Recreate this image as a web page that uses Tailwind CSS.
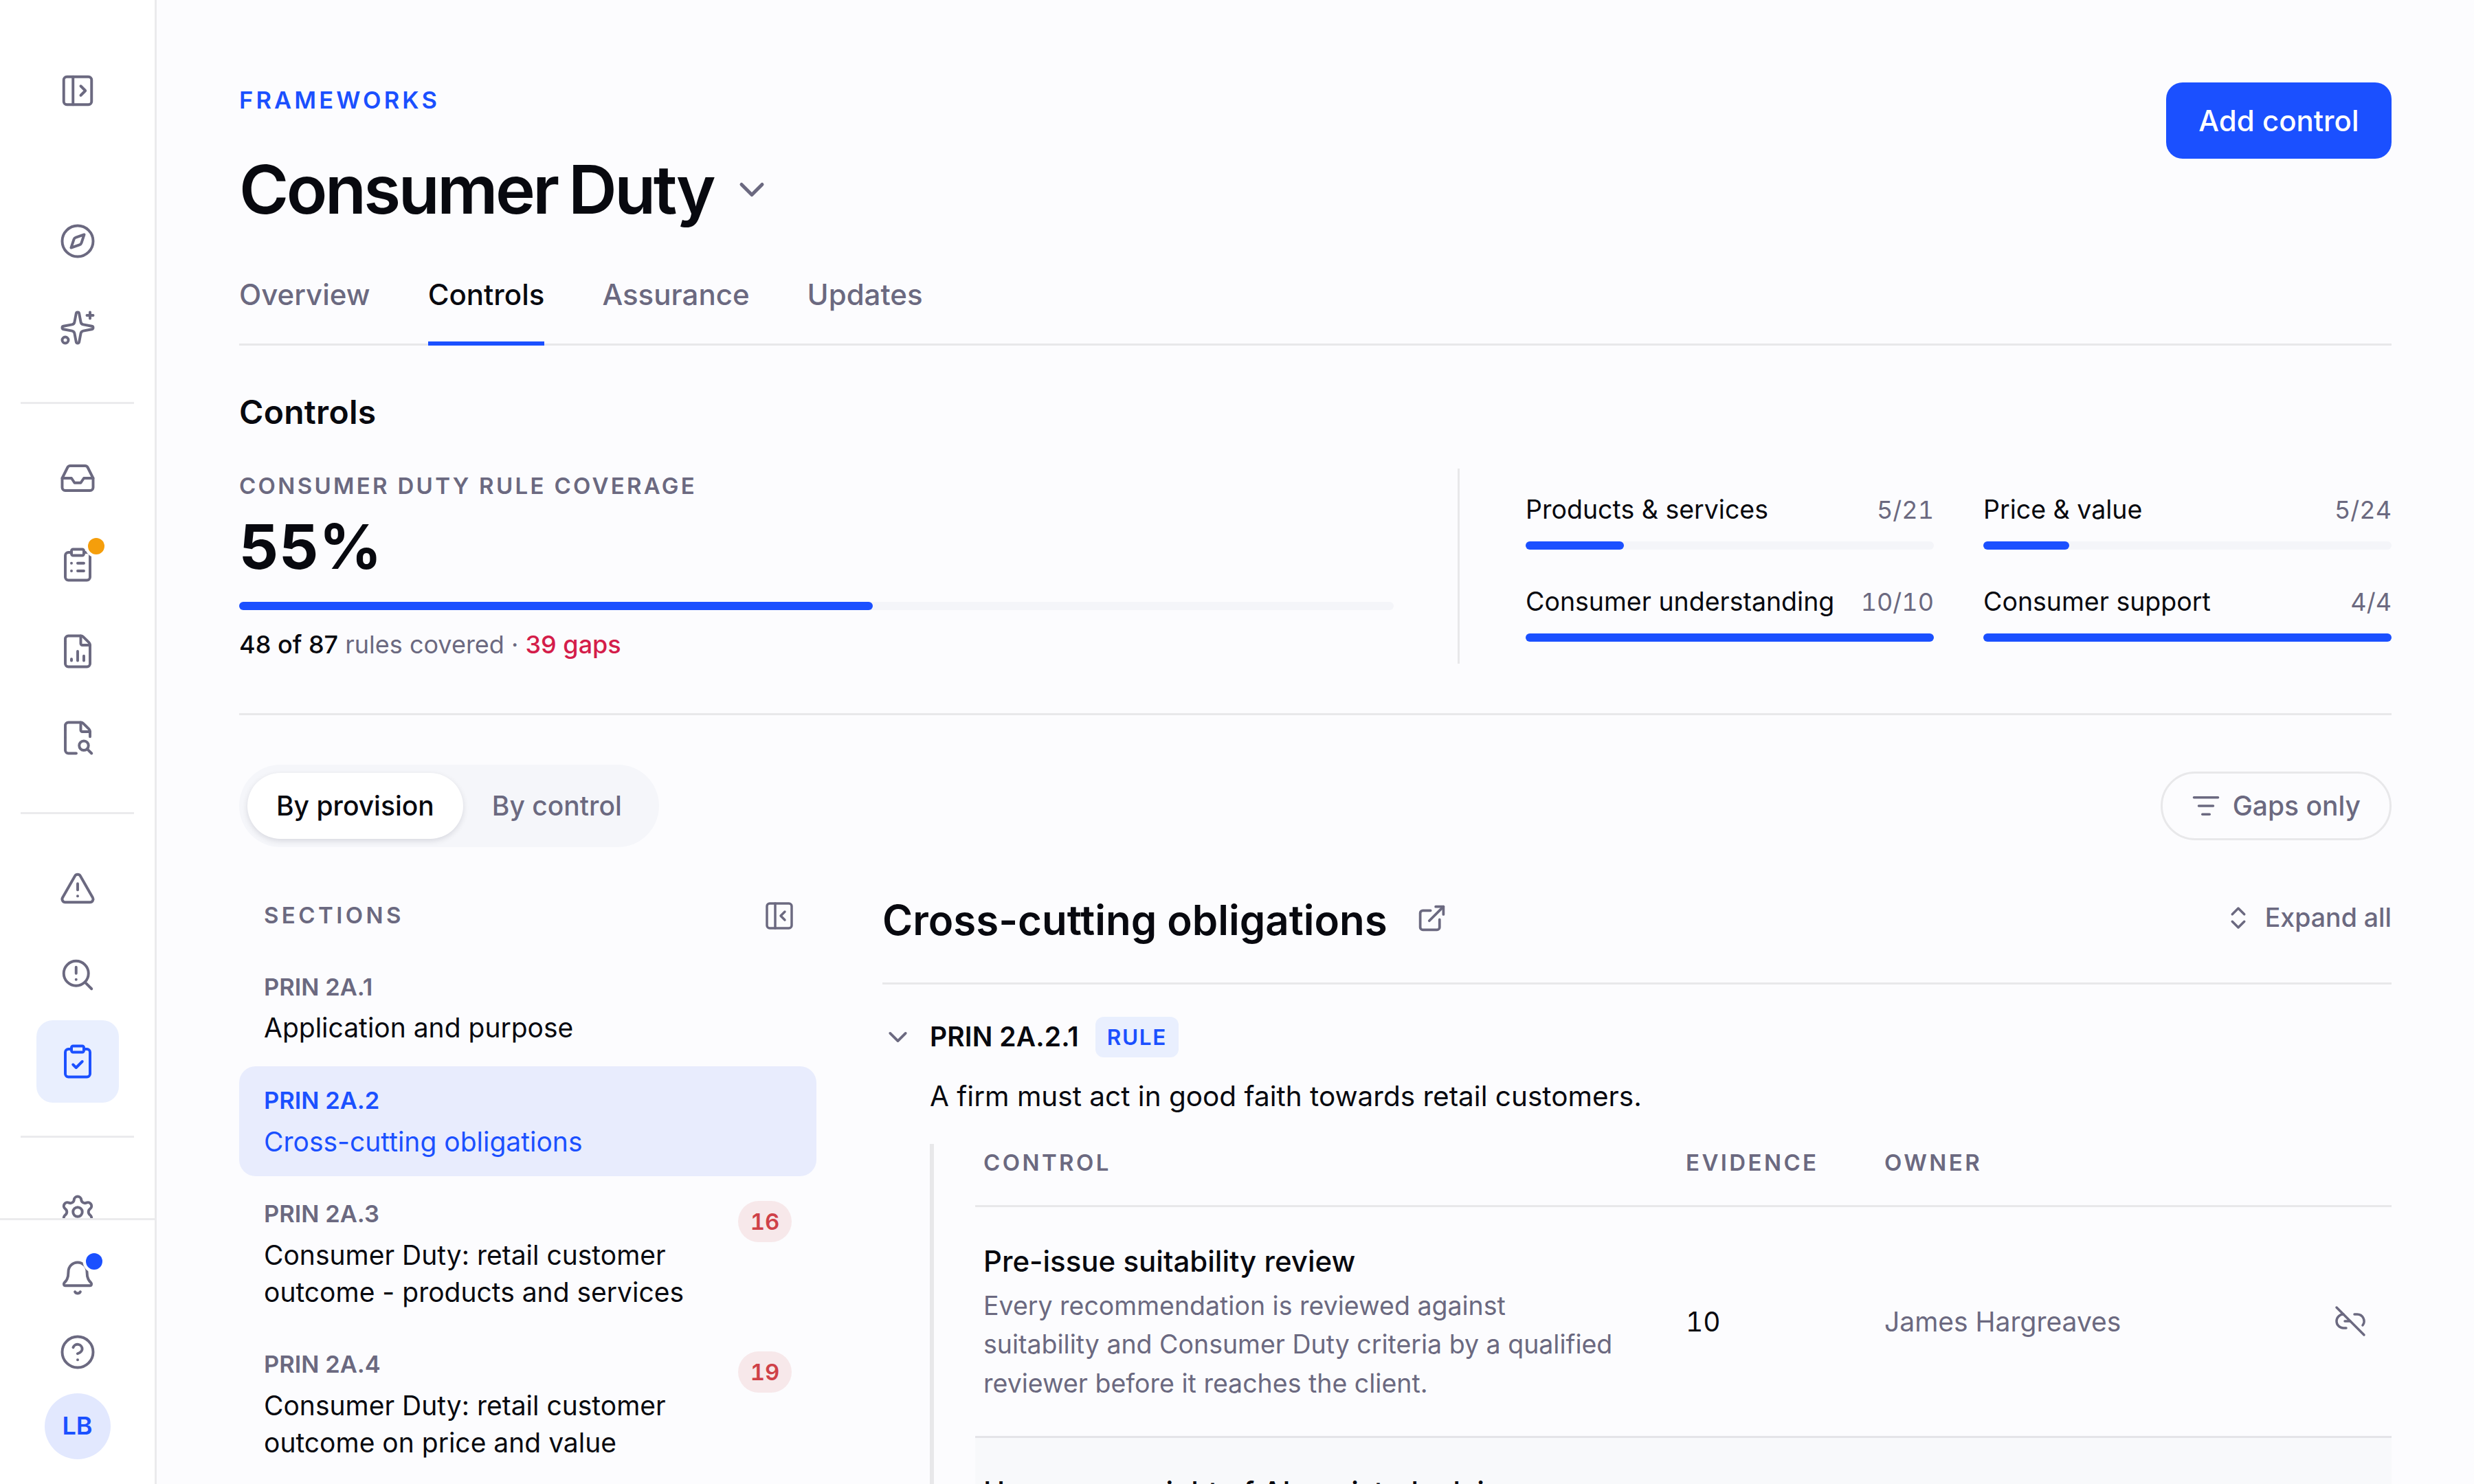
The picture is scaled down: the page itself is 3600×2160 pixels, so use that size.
<!DOCTYPE html>
<html lang="en">
<head>
  <meta charset="UTF-8" />
  <meta name="viewport" content="width=device-width, initial-scale=1.0" />
  <title>Consumer Duty - Controls</title>
  <script src="https://cdn.jsdelivr.net/npm/@tailwindcss/browser@4"></script>
</head>
<body class="flex h-screen overflow-hidden bg-[#fcfcfe] font-['Inter',sans-serif] text-[#08090f]">

  <!-- Sidebar -->
  <aside class="flex h-full w-[228px] shrink-0 flex-col border-r-3 border-[#ebebed] bg-white text-[#6b6980]">
    <div class="flex min-h-0 flex-1 flex-col items-center overflow-hidden pt-[72px]">
      <button class="flex size-[120px] shrink-0 items-center justify-center">
        <svg class="size-[54px]" viewBox="0 0 24 24" fill="none" stroke="currentColor" stroke-width="1.75" stroke-linecap="round" stroke-linejoin="round"><rect width="18" height="18" x="3" y="3" rx="2"/><path d="M9 3v18"/><path d="m14 9 3 3-3 3"/></svg>
      </button>

      <nav class="mt-[99px] flex w-full flex-col items-center gap-[6px]">
        <a class="flex size-[120px] items-center justify-center">
          <svg class="size-[54px]" viewBox="0 0 24 24" fill="none" stroke="currentColor" stroke-width="1.75" stroke-linecap="round" stroke-linejoin="round"><circle cx="12" cy="12" r="10"/><path d="m16.24 7.76-1.804 5.411a2 2 0 0 1-1.265 1.265L7.76 16.24l1.804-5.411a2 2 0 0 1 1.265-1.265z"/></svg>
        </a>
        <a class="flex size-[120px] items-center justify-center">
          <svg class="size-[54px]" viewBox="0 0 24 24" fill="none" stroke="currentColor" stroke-width="1.75" stroke-linecap="round" stroke-linejoin="round"><path d="M11.017 2.814a1 1 0 0 1 1.966 0l1.051 5.558a2 2 0 0 0 1.594 1.594l5.558 1.051a1 1 0 0 1 0 1.966l-5.558 1.051a2 2 0 0 0-1.594 1.594l-1.051 5.558a1 1 0 0 1-1.966 0l-1.051-5.558a2 2 0 0 0-1.594-1.594l-5.558-1.051a1 1 0 0 1 0-1.966l5.558-1.051a2 2 0 0 0 1.594-1.594z"/><path d="M20 2v4"/><path d="M22 4h-4"/><circle cx="4" cy="20" r="2"/></svg>
        </a>
      </nav>

      <div class="my-12 h-[3px] w-[165px] shrink-0 bg-[#ebebed]"></div>

      <nav class="flex w-full flex-col items-center gap-[6px]">
        <a class="flex size-[120px] items-center justify-center">
          <svg class="size-[54px]" viewBox="0 0 24 24" fill="none" stroke="currentColor" stroke-width="1.75" stroke-linecap="round" stroke-linejoin="round"><polyline points="22 12 16 12 14 15 10 15 8 12 2 12"/><path d="M5.45 5.11 2 12v6a2 2 0 0 0 2 2h16a2 2 0 0 0 2-2v-6l-3.45-6.89A2 2 0 0 0 16.76 4H7.24a2 2 0 0 0-1.79 1.11z"/></svg>
        </a>
        <a class="relative flex size-[120px] items-center justify-center">
          <svg class="size-[54px]" viewBox="0 0 24 24" fill="none" stroke="currentColor" stroke-width="1.75" stroke-linecap="round" stroke-linejoin="round"><rect width="8" height="4" x="8" y="2" rx="1" ry="1"/><path d="M16 4h2a2 2 0 0 1 2 2v14a2 2 0 0 1-2 2H6a2 2 0 0 1-2-2V6a2 2 0 0 1 2-2h2"/><path d="M12 11h4"/><path d="M12 16h4"/><path d="M8 11h.01"/><path d="M8 16h.01"/></svg>
          <span class="absolute top-[21px] left-[75px] size-6 rounded-full bg-[#f59e0b] ring-[4.5px] ring-white"></span>
        </a>
        <a class="flex size-[120px] items-center justify-center">
          <svg class="size-[54px]" viewBox="0 0 24 24" fill="none" stroke="currentColor" stroke-width="1.75" stroke-linecap="round" stroke-linejoin="round"><path d="M6 22a2 2 0 0 1-2-2V4a2 2 0 0 1 2-2h8a2.4 2.4 0 0 1 1.704.706l3.588 3.588A2.4 2.4 0 0 1 20 8v12a2 2 0 0 1-2 2z"/><path d="M14 2v5a1 1 0 0 0 1 1h5"/><path d="M8 18v-1"/><path d="M12 18v-6"/><path d="M16 18v-3"/></svg>
        </a>
        <a class="flex size-[120px] items-center justify-center">
          <svg class="size-[54px]" viewBox="0 0 24 24" fill="none" stroke="currentColor" stroke-width="1.75" stroke-linecap="round" stroke-linejoin="round"><path d="M11.1 22H6a2 2 0 0 1-2-2V4a2 2 0 0 1 2-2h8a2.4 2.4 0 0 1 1.706.706l3.589 3.588A2.4 2.4 0 0 1 20 8v3.25"/><path d="M14 2v5a1 1 0 0 0 1 1h5"/><path d="m21 22-2.88-2.88"/><circle cx="16" cy="17" r="3"/></svg>
        </a>
      </nav>

      <div class="my-12 h-[3px] w-[165px] shrink-0 bg-[#ebebed]"></div>

      <nav class="flex w-full flex-col items-center gap-[6px]">
        <a class="flex size-[120px] items-center justify-center">
          <svg class="size-[54px]" viewBox="0 0 24 24" fill="none" stroke="currentColor" stroke-width="1.75" stroke-linecap="round" stroke-linejoin="round"><path d="m21.73 18-8-14a2 2 0 0 0-3.48 0l-8 14A2 2 0 0 0 4 21h16a2 2 0 0 0 1.73-3"/><path d="M12 9v4"/><path d="M12 17h.01"/></svg>
        </a>
        <a class="flex size-[120px] items-center justify-center">
          <svg class="size-[54px]" viewBox="0 0 24 24" fill="none" stroke="currentColor" stroke-width="1.75" stroke-linecap="round" stroke-linejoin="round"><circle cx="11" cy="11" r="8"/><path d="m21 21-4.3-4.3"/><path d="M11 7v4"/><path d="M11 15h.01"/></svg>
        </a>
        <a class="flex size-[120px] items-center justify-center rounded-3xl bg-[#e9effe] text-[#1b50ff]">
          <svg class="size-[54px]" viewBox="0 0 24 24" fill="none" stroke="currentColor" stroke-width="1.75" stroke-linecap="round" stroke-linejoin="round"><rect width="8" height="4" x="8" y="2" rx="1" ry="1"/><path d="M16 4h2a2 2 0 0 1 2 2v14a2 2 0 0 1-2 2H6a2 2 0 0 1-2-2V6a2 2 0 0 1 2-2h2"/><path d="m9 14 2 2 4-4"/></svg>
        </a>
      </nav>

      <div class="my-12 h-[3px] w-[165px] shrink-0 bg-[#ebebed]"></div>

      <a class="flex size-[120px] shrink-0 items-center justify-center">
        <svg class="size-[54px]" viewBox="0 0 24 24" fill="none" stroke="currentColor" stroke-width="1.75" stroke-linecap="round" stroke-linejoin="round"><path d="M9.671 4.136a2.34 2.34 0 0 1 4.659 0 2.34 2.34 0 0 0 3.319 1.915 2.34 2.34 0 0 1 2.33 4.033 2.34 2.34 0 0 0 0 3.831 2.34 2.34 0 0 1-2.33 4.033 2.34 2.34 0 0 0-3.319 1.915 2.34 2.34 0 0 1-4.659 0 2.34 2.34 0 0 0-3.32-1.915 2.34 2.34 0 0 1-2.33-4.033 2.34 2.34 0 0 0 0-3.831A2.34 2.34 0 0 1 6.35 6.051a2.34 2.34 0 0 0 3.319-1.915"/><circle cx="12" cy="12" r="3"/></svg>
      </a>
    </div>

    <!-- Account -->
    <div class="flex shrink-0 flex-col items-center border-t-3 border-[#ebebed] pt-[30px] pb-9">
      <button class="relative flex size-[108px] items-center justify-center">
        <svg class="size-[54px]" viewBox="0 0 24 24" fill="none" stroke="currentColor" stroke-width="1.75" stroke-linecap="round" stroke-linejoin="round"><path d="M10.268 21a2 2 0 0 0 3.464 0"/><path d="M3.262 15.326A1 1 0 0 0 4 17h16a1 1 0 0 0 .74-1.673C19.41 13.956 18 12.499 18 8A6 6 0 0 0 6 8c0 4.499-1.411 5.956-2.738 7.326"/></svg>
        <span class="absolute top-[18px] left-[66px] size-6 rounded-full bg-[#1b50ff] ring-[4.5px] ring-white"></span>
      </button>
      <button class="flex size-[108px] items-center justify-center">
        <svg class="size-[54px]" viewBox="0 0 24 24" fill="none" stroke="currentColor" stroke-width="1.75" stroke-linecap="round" stroke-linejoin="round"><circle cx="12" cy="12" r="10"/><path d="M9.09 9a3 3 0 0 1 5.83 1c0 2-3 3-3 3"/><path d="M12 17h.01"/></svg>
      </button>
      <div class="mt-[6px] flex size-24 items-center justify-center rounded-full bg-[#e2e8fe] pb-[2px] text-[36px] font-semibold text-[#1b50ff]">LB</div>
    </div>
  </aside>

  <main class="min-w-0 flex-1 overflow-hidden px-[120px] pt-[120px]">
    <!-- Page header -->
    <header class="flex items-start justify-between">
      <div>
        <p class="text-[34.5px] leading-[52px] font-semibold tracking-[0.12em] text-[#1b50ff]">FRAMEWORKS</p>
        <div class="mt-[44px] flex items-center gap-[26px]">
          <h1 class="text-[98px] leading-[120px] font-semibold tracking-[-3.5px] [word-spacing:-5px]">Consumer Duty</h1>
          <svg class="size-[60px] text-[#6b6980]" viewBox="0 0 24 24" fill="none" stroke="currentColor" stroke-width="2" stroke-linecap="round" stroke-linejoin="round"><path d="m6 9 6 6 6-6"/></svg>
        </div>
      </div>
      <button class="h-[111px] rounded-3xl bg-[#1b50ff] px-[47.5px] text-[42px] font-medium text-white">Add control</button>
    </header>

    <!-- Tabs -->
    <nav class="mt-[61px] flex gap-[84px] border-b-3 border-[#e8e8ea] text-[42px] leading-[63px] font-medium text-[#6b6980]">
      <a class="pb-10">Overview</a>
      <a class="-mb-[3px] border-b-6 border-[#1b50ff] pb-[37px] text-[#08090f]">Controls</a>
      <a class="pb-10">Assurance</a>
      <a class="pb-10">Updates</a>
    </nav>

    <!-- Coverage -->
    <h2 class="mt-[67px] text-[48px] leading-[60px] font-semibold tracking-[0.3px]">Controls</h2>
    <section class="mt-[52px] flex gap-[93px] border-b-3 border-[#e8e8ea] pb-[72px]">
      <div class="h-[284px] w-[1680px] shrink-0">
        <p class="text-[33px] leading-[50px] font-semibold tracking-[0.1em] text-[#6b6980]">CONSUMER DUTY RULE COVERAGE</p>
        <p class="mt-[19px] text-[90px] leading-[90px] font-bold tabular-nums">55%</p>
        <div class="mt-[35px] h-3 rounded-full bg-[#f4f5f9]">
          <div class="h-3 rounded-full bg-[#1b50ff]" style="width: 54.9%"></div>
        </div>
        <p class="mt-[23px] text-[36px] leading-[54px] text-[#6b6980]"><span class="font-medium text-[#08090f]">48 of 87</span> rules covered · <span class="font-medium text-[#d41d4a]">39 gaps</span></p>
      </div>
      <div class="grid flex-1 grid-cols-2 content-center gap-x-[72px] gap-y-12 border-l-3 border-[#e8e8ea] pl-24 text-[37.5px] leading-[56.25px]">
        <div>
          <div class="flex justify-between"><span>Products &amp; services</span><span class="text-[36px] tabular-nums text-[#6b6980]">5/21</span></div>
          <div class="mt-[18px] h-3 rounded-full bg-[#f4f5f9]"><div class="h-3 rounded-full bg-[#1b50ff]" style="width: 24%"></div></div>
        </div>
        <div>
          <div class="flex justify-between"><span>Price &amp; value</span><span class="text-[36px] tabular-nums text-[#6b6980]">5/24</span></div>
          <div class="mt-[18px] h-3 rounded-full bg-[#f4f5f9]"><div class="h-3 rounded-full bg-[#1b50ff]" style="width: 21%"></div></div>
        </div>
        <div>
          <div class="flex justify-between"><span>Consumer understanding</span><span class="text-[36px] tabular-nums text-[#6b6980]">10/10</span></div>
          <div class="mt-[18px] h-3 rounded-full bg-[#f4f5f9]"><div class="h-3 rounded-full bg-[#1b50ff]" style="width: 100%"></div></div>
        </div>
        <div>
          <div class="flex justify-between"><span>Consumer support</span><span class="text-[36px] tabular-nums text-[#6b6980]">4/4</span></div>
          <div class="mt-[18px] h-3 rounded-full bg-[#f4f5f9]"><div class="h-3 rounded-full bg-[#1b50ff]" style="width: 100%"></div></div>
        </div>
      </div>
    </section>

    <!-- View switch and filter -->
    <div class="mt-[72px] flex items-center justify-between text-[39px] font-medium">
      <div class="flex h-[120px] items-center rounded-full bg-[#f5f6fa] p-3 text-[#6b6980]">
        <button class="h-24 rounded-full bg-white px-[42px] text-[#08090f] shadow-[0_3px_9px_rgba(10,12,30,0.12)]">By provision</button>
        <button class="h-24 px-[42px]">By control</button>
      </div>
      <button class="flex h-[100px] items-center gap-[18px] rounded-full border-3 border-[#e8e8ea] px-[42px] text-[#6b6980]">
        <svg class="size-[42px]" viewBox="0 0 24 24" fill="none" stroke="currentColor" stroke-width="2" stroke-linecap="round" stroke-linejoin="round"><path d="M2 5h20"/><path d="M6 12h12"/><path d="M9 19h6"/></svg>
        Gaps only
      </button>
    </div>

    <div class="mt-[67px] flex gap-24">
      <!-- Sections -->
      <div class="w-[840px] shrink-0 pt-[9px]">
        <div class="flex h-12 items-center justify-between pr-[30px] pl-9 text-[#6b6980]">
          <span class="text-[33px] font-semibold tracking-[4.4px]">SECTIONS</span>
          <svg class="size-12" viewBox="0 0 24 24" fill="none" stroke="currentColor" stroke-width="1.75" stroke-linecap="round" stroke-linejoin="round"><rect width="18" height="18" x="3" y="3" rx="2"/><path d="M9 3v18"/><path d="m16 15-3-3 3-3"/></svg>
        </div>
        <ul class="mt-[30px] flex flex-col gap-[5px] text-[39px] leading-[54px]">
          <li class="px-9 pt-[24px] pb-[24px]">
            <p class="text-[34.5px] leading-[51px] font-semibold text-[#6b6980]">PRIN 2A.1</p>
            <p class="mt-[7px]">Application and purpose</p>
          </li>
          <li class="rounded-3xl bg-[#e8ecfd] px-9 pt-[24px] pb-[23px] text-[#1b50ff]">
            <p class="text-[34.5px] leading-[51px] font-semibold">PRIN 2A.2</p>
            <p class="mt-[8px]">Cross-cutting obligations</p>
          </li>
          <li class="flex items-start justify-between px-9 pt-[24px] pb-[23px]">
            <div class="w-[640px]">
              <p class="text-[34.5px] leading-[51px] font-semibold text-[#6b6980]">PRIN 2A.3</p>
              <p class="mt-[8px]">Consumer Duty: retail customer outcome - products and services</p>
            </div>
            <span class="mt-[7px] flex h-[60px] w-[78px] items-center justify-center rounded-full bg-[#f7e8ea] text-[33px] font-semibold tabular-nums text-[#cf4148]">16</span>
          </li>
          <li class="flex items-start justify-between px-9 pt-[24px] pb-[23px]">
            <div class="w-[640px]">
              <p class="text-[34.5px] leading-[51px] font-semibold text-[#6b6980]">PRIN 2A.4</p>
              <p class="mt-[8px]">Consumer Duty: retail customer outcome on price and value</p>
            </div>
            <span class="mt-[7px] flex h-[60px] w-[78px] items-center justify-center rounded-full bg-[#f7e8ea] text-[33px] font-semibold tabular-nums text-[#cf4148]">19</span>
          </li>
        </ul>
      </div>

      <!-- Obligations -->
      <div class="min-w-0 flex-1">
        <div class="box-content flex h-[72px] items-center justify-between border-b-3 border-[#e8e8ea] pb-[58px]">
          <div class="flex items-center gap-[42px]">
            <h3 class="pt-[5px] text-[60px] leading-[72px] font-semibold">Cross-cutting obligations</h3>
            <svg class="size-[45px] text-[#6b6980]" viewBox="0 0 24 24" fill="none" stroke="currentColor" stroke-width="2" stroke-linecap="round" stroke-linejoin="round"><path d="M15 3h6v6"/><path d="M10 14 21 3"/><path d="M18 13v6a2 2 0 0 1-2 2H5a2 2 0 0 1-2-2V8a2 2 0 0 1 2-2h6"/></svg>
          </div>
          <button class="flex items-center gap-[18px] text-[37.5px] font-medium text-[#6b6980]">
            <svg class="size-[42px]" viewBox="0 0 24 24" fill="none" stroke="currentColor" stroke-width="2" stroke-linecap="round" stroke-linejoin="round"><path d="m7 15 5 5 5-5"/><path d="m7 9 5-5 5 5"/></svg>
            Expand all
          </button>
        </div>

        <div class="mt-[47px] flex h-[59px] items-center">
          <svg class="size-[45px] text-[#6b6980]" viewBox="0 0 24 24" fill="none" stroke="currentColor" stroke-width="2" stroke-linecap="round" stroke-linejoin="round"><path d="m6 9 6 6 6-6"/></svg>
          <span class="ml-6 text-[39px] font-semibold tracking-[0.1px]">PRIN 2A.2.1</span>
          <span class="ml-6 flex h-[59px] items-center rounded-xl bg-[#e9effe] px-[17px] text-[31.5px] font-semibold tracking-[1.6px] text-[#1b50ff]">RULE</span>
        </div>
        <p class="mt-[26px] pl-[69px] text-[40.5px] leading-[61px]">A firm must act in good faith towards retail customers.</p>

        <div class="mt-[39px] ml-[69px] border-l-6 border-[#e8e8ea] pl-[60px]">
          <div class="grid grid-cols-[1022px_289px_1fr] border-b-3 border-[#e8e8ea] pt-[2px] pb-[37px] text-[33px] leading-[50px] font-semibold tracking-[3.4px] text-[#6b6980]">
            <span class="pl-3">CONTROL</span>
            <span class="pl-3">EVIDENCE</span>
            <span class="pl-3">OWNER</span>
          </div>
          <div class="grid grid-cols-[1022px_289px_1fr_auto] items-center border-b-3 border-[#e4e4e8] pt-[47px] pb-12 text-[39px]">
            <div class="pl-3">
              <p class="text-[42px] leading-[63px] font-medium">Pre-issue suitability review</p>
              <p class="mt-[6px] max-w-[924px] text-[37.5px] leading-[56.25px] text-[#6b6980]">Every recommendation is reviewed against suitability and Consumer Duty criteria by a qualified reviewer before it reaches the client.</p>
            </div>
            <span class="pt-[2px] pl-3 tabular-nums">10</span>
            <span class="pt-[2px] pl-3 text-[#6b6980]">James Hargreaves</span>
            <svg class="mr-9 size-12 text-[#6b6980]" viewBox="0 0 24 24" fill="none" stroke="currentColor" stroke-width="1.75" stroke-linecap="round" stroke-linejoin="round"><path d="M9 17H7A5 5 0 0 1 7 7"/><path d="M15 7h2a5 5 0 0 1 4 8"/><line x1="8" x2="12" y1="12" y2="12"/><line x1="2" x2="22" y1="2" y2="22"/></svg>
          </div>
          <div class="h-[336px] bg-[#f8f9fb] pt-[47px] pl-3">
            <p class="text-[42px] leading-[63px] font-medium">Human oversight of AI-assisted advice</p>
          </div>
        </div>
      </div>
    </div>
  </main>
</body>
</html>
